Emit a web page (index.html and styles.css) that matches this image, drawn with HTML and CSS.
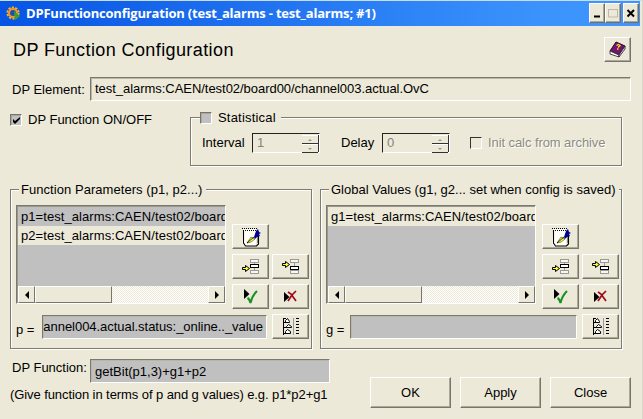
FILE: index.html
```html
<!DOCTYPE html>
<html lang="en">
<head>
<meta charset="utf-8">
<title>DPFunctionconfiguration</title>
<link rel="stylesheet" href="styles.css">
</head>
<body>
<svg class="defs" width="0" height="0">
  <defs>
    <symbol id="note" viewBox="0 0 20 20">
      <path d="M2 2h13v17H3L1 16z" fill="#fffff8"/>
      <path d="M2.500 3v13l2 3h11l2-2V9" fill="none" stroke="#000" stroke-width="1.100"/>
      <path d="M1 1.500h15M2 3.500h13" stroke="#000" stroke-dasharray="1 1"/>
      <path d="M6 16l4-6 4 2-4 3z" fill="#ffff40" stroke="#333" stroke-width=".6"/>
      <path d="M13 10l2-6 2-2 1 3 2 1-2 1 1 2-3 1-2 2z" fill="#000090"/>
      <path d="M6 16l7-6M17 9v7" stroke="#000" stroke-width=".8"/>
    </symbol>
    <symbol id="insert-mid" viewBox="0 0 19 17" shape-rendering="crispEdges">
      <path d="M13.500 4v9" stroke="#999"/>
      <path d="M9.500 1.500h8v3h-8zM9.500 12.500h8v3h-8z" fill="#f8f7ef" stroke="#999"/>
      <path d="M9.500 6.500h8v3h-8z" fill="#fff" stroke="#000"/>
      <path d="M1.500 9.500h3v-2l4 3-4 3v-2h-3z" fill="#ffff30" stroke="#000" shape-rendering="auto"/>
    </symbol>
    <symbol id="insert-low" viewBox="0 0 19 17" shape-rendering="crispEdges">
      <path d="M13.500 4v9" stroke="#999"/>
      <path d="M9.500 1.500h8v3h-8zM9.500 12.500h8v3h-8z" fill="#f8f7ef" stroke="#999"/>
      <path d="M9.500 8.500h8v3h-8z" fill="#fff" stroke="#000"/>
      <path d="M1.500 5.500h3v-2l4 3-4 3v-2h-3z" fill="#ffff30" stroke="#000" shape-rendering="auto"/>
    </symbol>
    <symbol id="accept" viewBox="0 0 16 16">
      <path d="M1 0l5.500 5-5.500 5z" fill="#000"/>
      <path d="M4.500 9q2 1 3 5Q9 7 14 2" fill="none" stroke="#159025" stroke-width="2"/>
    </symbol>
    <symbol id="remove" viewBox="0 0 16 13">
      <path d="M1 2l5.500 5L1 12z" fill="#000"/>
      <path d="M5 2l3 2 5 7M13 1L9 5l-4 6" fill="none" stroke="#a00818" stroke-width="1.700"/>
    </symbol>
    <symbol id="tree" viewBox="0 0 18 19">
      <path d="M1.500 1v17M1 1.500h3M1 5.500h3M1 10.500h4M1 16.500h3" fill="none" stroke="#000"/>
      <path d="M3.500 5.500v-2l2-2 2 3v1zM4.500 10.500v-1l2-2 3 2v1zM3.500 16.500v-2l2-2 3 2v2z" fill="#fff" stroke="#000"/>
      <path d="M11.500 1v17" stroke="#999"/>
      <path d="M14 1.500h3M14 4.500h3M14 7.500h3M14 10.500h3M14 13.500h3M14 16.500h3" stroke="#000"/>
    </symbol>
  </defs>
</svg>
<div class="window">
  <header class="titlebar">
    <svg class="gear" viewBox="0 0 14 14"><circle cx="7" cy="7" r="5.600" fill="none" stroke="#f7b030" stroke-width="2" stroke-dasharray="2.200 1.300"/><circle cx="7" cy="7" r="4" fill="#1c50b0" stroke="#f39a20" stroke-width="2"/><path d="M8 5l6 5-5 4z" fill="#38a030"/></svg>
    <h1 class="caption">DPFunctionconfiguration (test_alarms - test_alarms; #1)</h1>
    <div class="controls">
      <button class="ctl"><svg viewBox="0 0 13 18"><path d="M4 12.500h6" stroke="#000" stroke-width="2"/></svg></button>
      <button class="ctl"><svg viewBox="0 0 13 18"><path d="M2 5.500h9M2.500 5v8h9V5" fill="none" stroke="#bdb9a8"/></svg></button>
      <button class="ctl close"><svg viewBox="0 0 13 18"><path d="M3.500 6l6.500 6.500M10 6l-6.500 6.500" stroke="#000" stroke-width="2"/></svg></button>
    </div>
  </header>

  <div class="heading">
    <h2>DP Function Configuration</h2>
    <button class="btn help"><svg viewBox="0 0 17 17"><path d="M1 10l6-9 9 4-6 9z" fill="#701870" stroke="#280828"/><path d="M1 10v3l9 3v-2z" fill="#fff" stroke="#222" stroke-width=".8"/><path d="M10 14v2l6-8V5z" fill="#ddd" stroke="#301030" stroke-width=".8"/><path d="M7.500 4.500l2-1 1.500 1-2 2M8 8h1.500" fill="none" stroke="#ffe020" stroke-width="1.300"/></svg></button>
  </div>

  <div class="element">
    <label>DP Element:</label>
    <div class="field">test_alarms:CAEN/test02/board00/channel003.actual.OvC</div>
  </div>

  <div class="options">
    <label class="switch"><span class="check on"><svg viewBox="0 0 9 9"><path d="M1 3v3l2 2 5-5V1L3 5z" fill="#000"/></svg></span>DP Function ON/OFF</label>
    <section class="group statistical">
      <div class="legend"><span class="check on"></span>Statistical</div>
      <div class="stats">
        <label class="interval">Interval</label>
        <div class="spin"><span>1</span><div class="steps"><i class="up"></i><i class="down"></i></div></div>
        <label class="delay">Delay</label>
        <div class="spin"><span>0</span><div class="steps"><i class="up"></i><i class="down"></i></div></div>
        <span class="check off"></span>
        <label class="disabled">Init calc from archive</label>
      </div>
    </section>
  </div>

  <main class="groups">
    <section class="group values">
      <div class="legend params">Function Parameters (p1, p2...)</div>
      <div class="body">
        <div class="list">
          <div class="row selected">p1=test_alarms:CAEN/test02/board</div>
          <div class="row">p2=test_alarms:CAEN/test02/board</div>
          <div class="scroll"><b class="arrow left"></b><b class="thumb"></b><b class="arrow right"></b></div>
        </div>
        <div class="tools">
          <button class="btn wide"><svg class="i-note"><use href="#note"/></svg></button>
          <button class="btn"><svg class="i-ins"><use href="#insert-mid"/></svg></button>
          <button class="btn"><svg class="i-ins"><use href="#insert-low"/></svg></button>
          <button class="btn"><svg class="i-ok"><use href="#accept"/></svg></button>
          <button class="btn"><svg class="i-del"><use href="#remove"/></svg></button>
        </div>
      </div>
      <div class="assign">
        <label class="p">p =</label>
        <div class="field gray end"><span>annel004.actual.status:_online.._value</span></div>
        <button class="btn"><svg class="i-tree"><use href="#tree"/></svg></button>
      </div>
    </section>
    <section class="group values">
      <div class="legend">Global Values (g1, g2... set when config is saved)</div>
      <div class="body">
        <div class="list">
          <div class="row">g1=test_alarms:CAEN/test02/board</div>
          <div class="scroll"><b class="arrow left"></b><b class="thumb"></b><b class="arrow right"></b></div>
        </div>
        <div class="tools">
          <button class="btn wide"><svg class="i-note"><use href="#note"/></svg></button>
          <button class="btn"><svg class="i-ins"><use href="#insert-mid"/></svg></button>
          <button class="btn"><svg class="i-ins"><use href="#insert-low"/></svg></button>
          <button class="btn"><svg class="i-ok"><use href="#accept"/></svg></button>
          <button class="btn"><svg class="i-del"><use href="#remove"/></svg></button>
        </div>
      </div>
      <div class="assign">
        <label class="g">g =</label>
        <div class="field gray"></div>
        <button class="btn"><svg class="i-tree"><use href="#tree"/></svg></button>
      </div>
    </section>
  </main>

  <footer class="bottom">
    <div class="formula">
      <div class="line"><label>DP Function:</label><div class="field gray">getBit(p1,3)+g1+p2</div></div>
      <p class="hint">(Give function in terms of p and g values) e.g. p1*p2+g1</p>
    </div>
    <div class="actions">
      <button class="btn">OK</button>
      <button class="btn">Apply</button>
      <button class="btn">Close</button>
    </div>
  </footer>
</div>
</body>
</html>
```

FILE: styles.css
```css
* { box-sizing: border-box; }
body {
  margin: 0;
  font: 13px/16px "Liberation Sans", Arial, sans-serif;
  color: #000;
  font-variant-ligatures: none;
}
.defs { display: block; }
h1, h2, p { margin: 0; font-weight: normal; }
label, .legend, .field, .row { white-space: nowrap; }
.window {
  width: 643px;
  height: 419px;
  overflow: hidden;
  background: #ece9d8;
  border-top: 1px solid #c8ddf0;
  border-right: 1px solid #d9d6c8;
}

.titlebar {
  display: flex;
  height: 25px;
  width: 640px;
  padding: 2px 1px 0 6px;
  background: linear-gradient(90deg, #0654e4, #3c93fc 85%, #3d95ff);
}
.gear { width: 14px; height: 14px; margin-top: 3px; }
.caption {
  flex: 1;
  margin-left: 6px;
  font: bold 13px/20px "Open Sans", "Noto Sans", sans-serif;
  letter-spacing: -0.19px;
  color: #fff;
  white-space: nowrap;
}
.controls { display: flex; }
.ctl {
  width: 16px;
  height: 20px;
  padding: 0;
  background: #ece9d8;
  border: 1px solid;
  border-color: #fff #716f64 #716f64 #fff;
  box-shadow: inset -1px -1px #aca899;
}
.ctl svg { display: block; width: 13px; height: 18px; }
.ctl.close { margin-left: 2px; }

.btn {
  display: flex;
  flex: none;
  align-items: center;
  justify-content: center;
  width: 37px;
  height: 25px;
  padding: 0;
  font: inherit;
  color: #000;
  background: #ece9d8;
  border: 1px solid;
  border-color: #fff #78766a #78766a #fff;
  box-shadow: inset -1px -1px #aca899;
}
.heading {
  display: flex;
  justify-content: space-between;
  height: 51px;
  padding: 11px 11px 0 13px;
}
.heading h2 { font-size: 18px; line-height: 26px; letter-spacing: 0.4px; }
.help { width: 27px; }
.help svg { width: 17px; height: 17px; }

.field {
  height: 24px;
  padding: 2px 0 0 4px;
  line-height: 16px;
  overflow: hidden;
  border: 1px solid;
  border-color: #7c7a6e #fff #fff #7c7a6e;
  box-shadow: inset 1px 1px #b9b6a7;
}
.gray { background: #c0c0c0; }
.element { display: flex; padding: 0 11px 0 12px; height: 24px; }
.element label { width: 78px; padding-top: 5px; }
.element .field { flex: 1; padding-top: 3px; letter-spacing: -0.04px; }

.options { display: flex; height: 88px; padding: 16px 0 0 10px; }
.switch { display: flex; width: 180px; height: 16px; margin-top: -5px; gap: 6px; align-items: center; }
.check {
  flex: none;
  width: 12px;
  height: 12px;
  border: 1px solid;
  border-color: #77756a #fff #fff #77756a;
  box-shadow: inset 1px 1px #aaa89c;
}
.check.on { background: #c0c0c0; }
.check.off { border-color: #333 #fff #fff #333; box-shadow: none; }
.check svg { display: block; width: 9px; height: 9px; margin: 1px 0 0 1px; }

.group {
  border: 1px solid #7e7c70;
  box-shadow: 1px 1px #fff, inset 1px 1px #fff;
}
.legend {
  display: flex;
  align-items: center;
  width: max-content;
  height: 16px;
  margin-top: -8px;
  background: #ece9d8;
}
.statistical { width: 432px; height: 49px; }
.statistical .legend { margin-left: 9px; padding-right: 5px; gap: 6px; letter-spacing: 0.2px; }
.stats { display: flex; align-items: center; margin-top: 7px; padding-left: 11px; }
.interval { width: 50px; }
.delay { width: 41px; margin-left: 21px; }
.spin {
  display: flex;
  width: 68px;
  height: 20px;
  padding: 1px 0 0 4px;
  justify-content: space-between;
  color: #85837a;
  border: 1px solid;
  border-color: #222 #fff #fff #222;
}
.steps { width: 17px; height: 17px; border-right: 1px solid #333; }
.steps i {
  display: grid;
  place-items: center;
  height: 9px;
  border-top: 1px solid #fff;
  border-bottom: 1px solid #333;
}
.steps i::before { content: ""; border: 2px solid transparent; }
.steps .up::before { border-bottom-color: #99978a; border-top: 0; }
.steps .down::before { border-top-color: #99978a; border-bottom: 0; }
.stats .check { margin-left: 20px; }
.disabled { margin-left: 6px; color: #8d8b7e; text-shadow: 1px 1px #fff; letter-spacing: -0.08px; }

.groups { display: flex; gap: 8px; height: 170px; padding-left: 10px; }
.values { width: 302px; height: 160px; padding-left: 5px; }
.values .legend { margin-left: 3px; padding: 0 4px 0 2px; }
.values .params { letter-spacing: 0.05px; }
.body { display: flex; gap: 6px; margin-top: 7px; height: 100px; }
.list {
  display: flex;
  flex-direction: column;
  width: 210px;
  height: 99px;
  background: #c0c0c0;
  border: 1px solid;
  border-color: #7c7a6e #fff #fff #7c7a6e;
  box-shadow: inset 1px 1px #9a988c;
  padding: 1px 0 0 1px;
}
.row { height: 19px; padding: 2px 0 0 3px; background: #ece9d8; overflow: hidden; letter-spacing: 0.07px; }
.selected { background: #c0c0c0; }
.scroll {
  display: flex;
  height: 17px;
  margin-top: auto;
  background: repeating-conic-gradient(#fff 0 25%, #ece9d8 0 50%) 0 0 / 2px 2px;
}
.arrow, .thumb {
  display: grid;
  place-items: center;
  width: 17px;
  background: #ece9d8;
  border: 1px solid;
  border-color: #fff #78766a #78766a #fff;
}
.thumb { width: 77px; }
.arrow::before { content: ""; border: 4px solid transparent; }
.left::before { border-right-color: #000; border-left: 0; }
.right { margin-left: auto; }
.right::before { border-left-color: #000; border-right: 0; }
.tools {
  display: grid;
  grid-template-columns: 37px 37px;
  grid-auto-rows: 25px;
  gap: 5px 3px;
  margin-top: 19px;
}
.wide { grid-column: 1 / -1; }
.i-note { width: 20px; height: 20px; }
.i-ins { width: 19px; height: 17px; }
.i-ok { width: 16px; height: 16px; }
.i-del { width: 16px; height: 13px; }
.i-tree { width: 18px; height: 19px; }
.assign { display: flex; margin-top: 9px; width: 293px; }
.assign label { flex: none; padding-top: 8px; }
.assign .p { width: 26px; }
.assign .g { width: 24px; }
.assign .field { flex: 1; margin: 1px 5px 0 0; height: 24px; }
.assign .end { display: flex; justify-content: flex-end; padding: 3px 3px 0 0; letter-spacing: -0.04px; }

.bottom { display: flex; justify-content: space-between; padding: 0 11px 0 10px; }
.line { display: flex; }
.line label { width: 80px; padding: 1px 0 0 2px; }
.line .field { width: 240px; padding-top: 4px; }
.hint { margin-top: 4px; letter-spacing: -0.08px; }
.actions { display: flex; gap: 9px; margin-top: 18px; }
.actions .btn { width: 81px; height: 31px; }
```
